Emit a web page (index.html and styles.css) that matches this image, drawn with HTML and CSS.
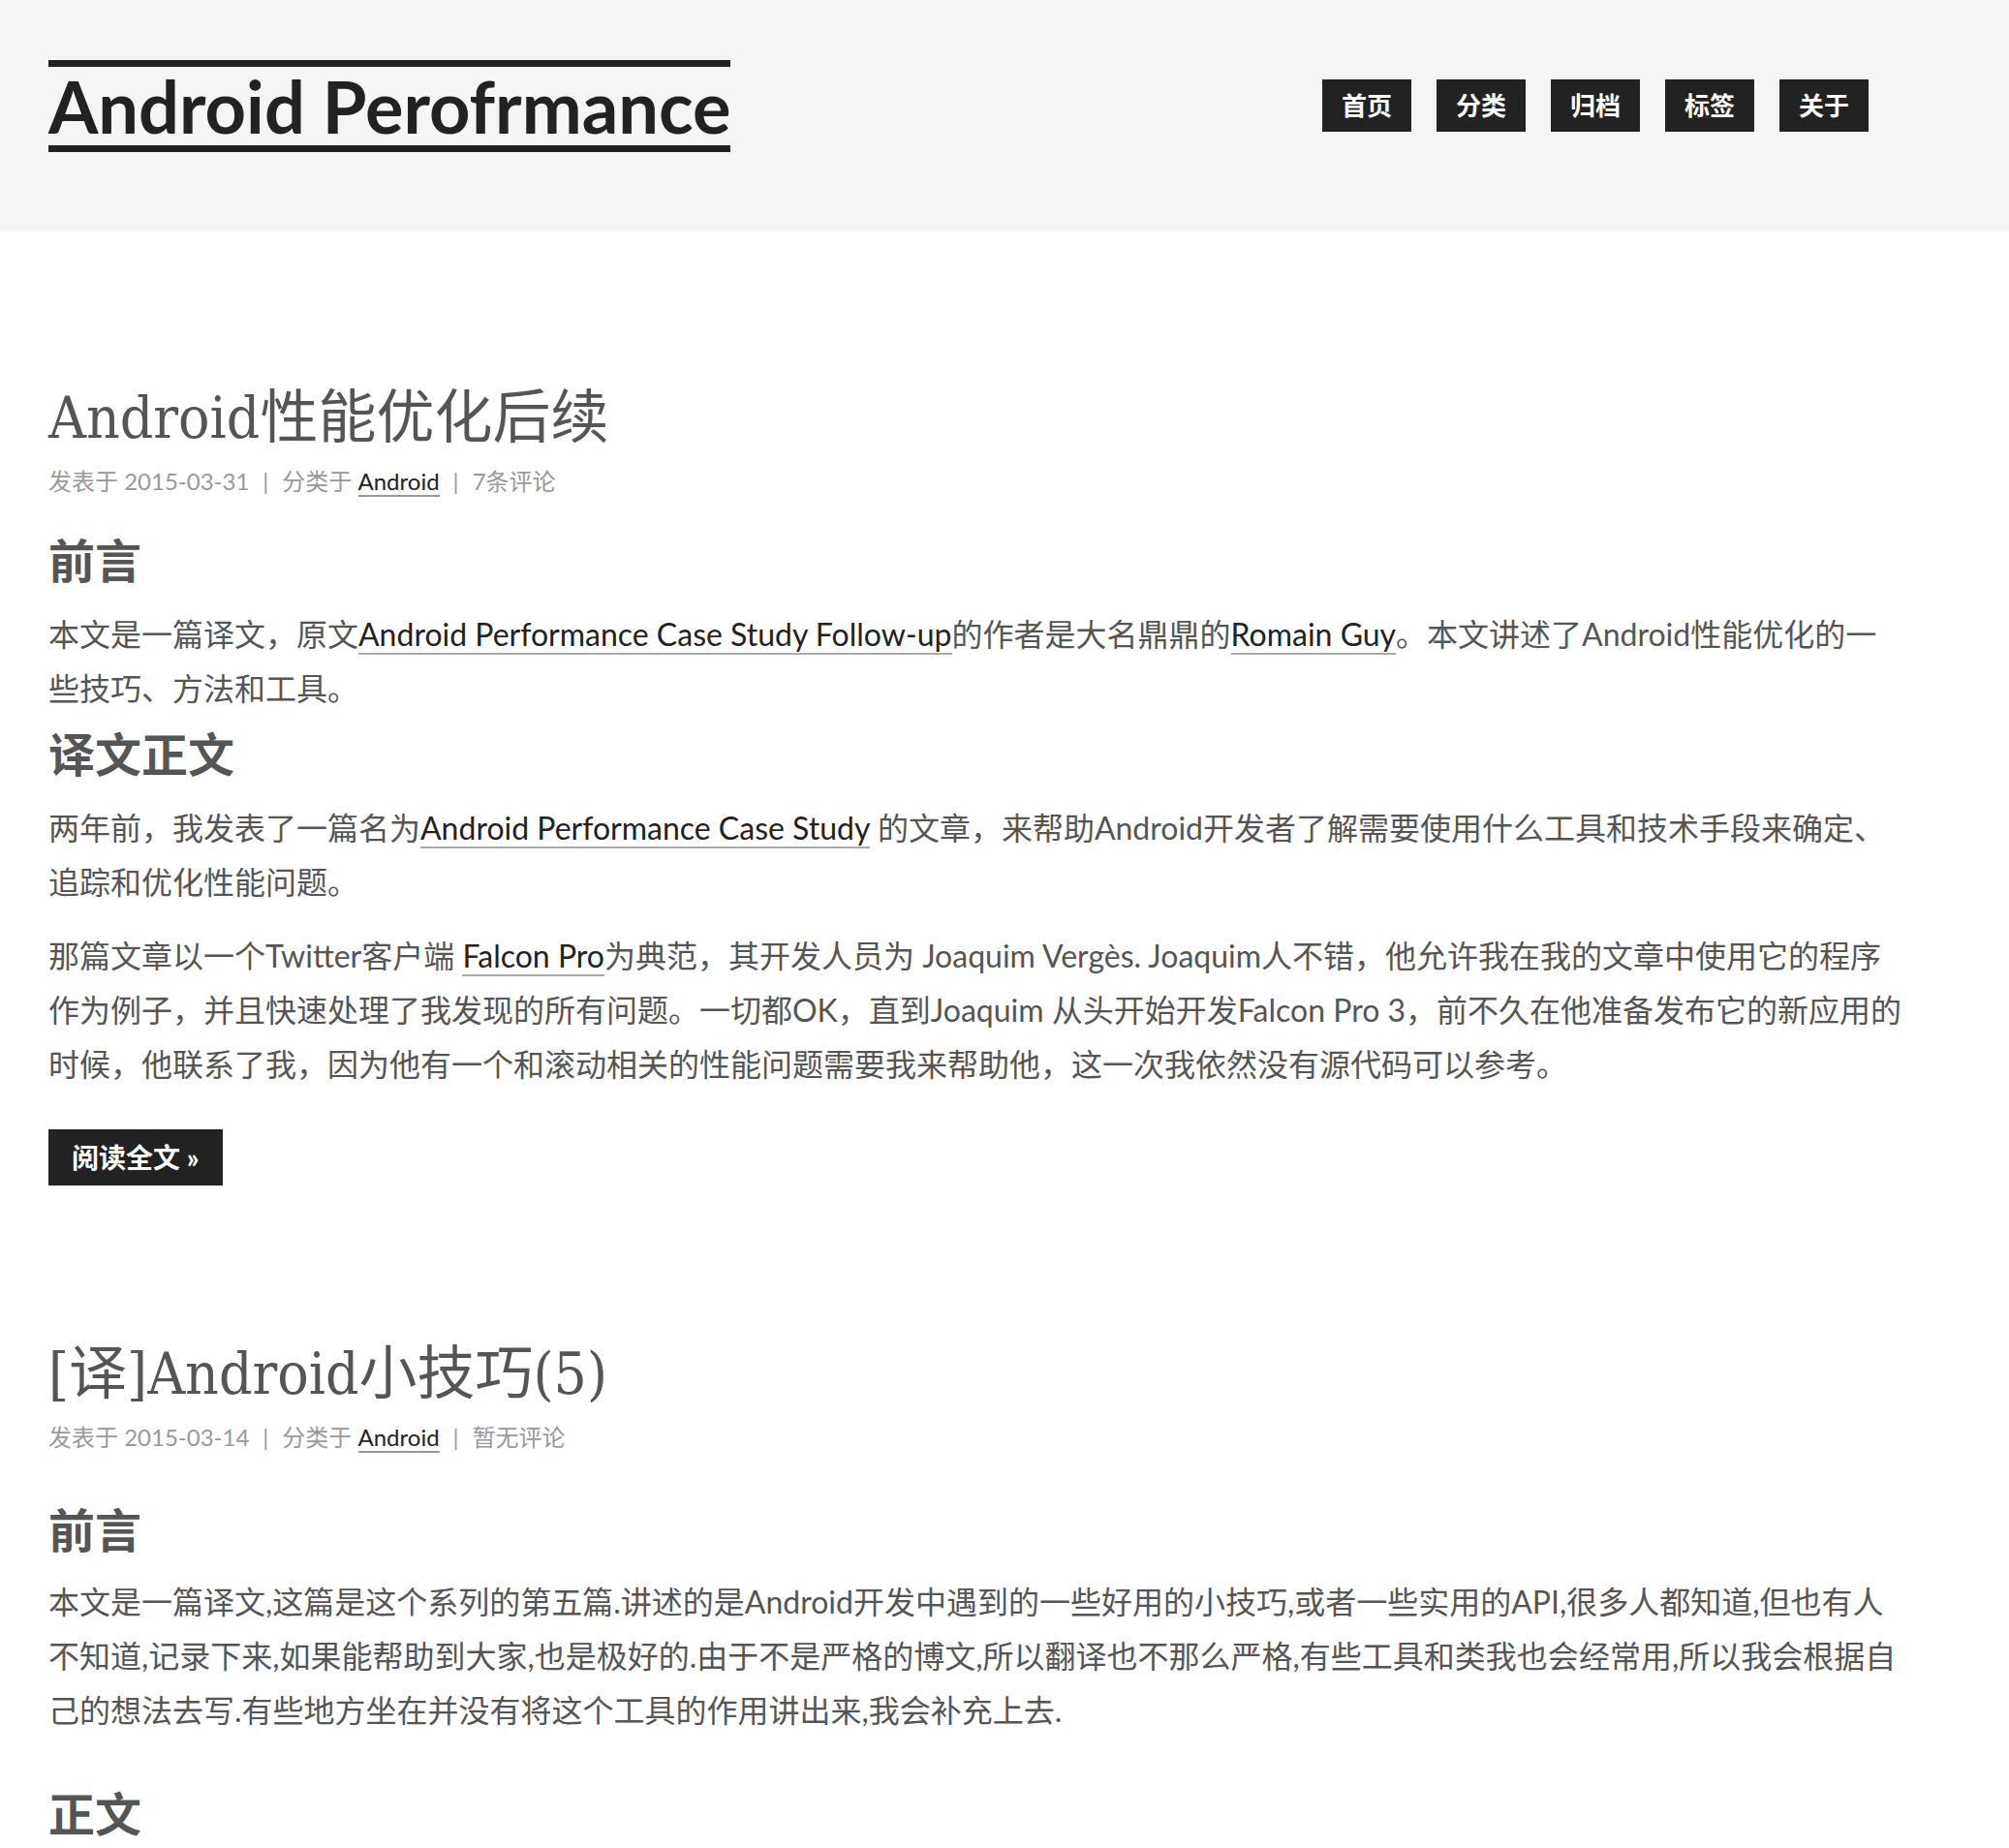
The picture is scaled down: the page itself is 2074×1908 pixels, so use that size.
FILE: index.html
```html
<!DOCTYPE html>
<html lang="zh-CN">
<head>
<meta charset="utf-8">
<title>Android Perofrmance</title>
<link rel="stylesheet" href="styles.css">
</head>
<body>
<header class="site-header">
  <div class="header-inner">
    <a class="logo" href="#">Android Perofrmance</a>
    <nav class="menu">
      <a class="menu-item" href="#">首页</a>
      <a class="menu-item" href="#">分类</a>
      <a class="menu-item" href="#">归档</a>
      <a class="menu-item" href="#">标签</a>
      <a class="menu-item" href="#">关于</a>
    </nav>
  </div>
</header>

<main class="content">
  <article class="post">
    <h1 class="post-title">Android性能优化后续</h1>
    <div class="post-meta">发表于 2015-03-31<span class="sep">|</span>分类于 <a class="meta-link" href="#">Android</a><span class="sep">|</span>7条评论</div>
    <div class="post-body">
      <h2>前言</h2>
      <p>本文是一篇译文，原文<a class="link" href="#">Android Performance Case Study Follow-up</a>的作者是大名鼎鼎的<a class="link" href="#">Romain Guy</a>。本文讲述了Android性能优化的一些技巧、方法和工具。</p>
      <h2>译文正文</h2>
      <p>两年前，我发表了一篇名为<a class="link" href="#">Android Performance Case Study</a> 的文章，来帮助Android开发者了解需要使用什么工具和技术手段来确定、追踪和优化性能问题。</p>
      <p>那篇文章以一个Twitter客户端 <a class="link" href="#">Falcon Pro</a>为典范，其开发人员为 Joaquim Vergès. Joaquim人不错，他允许我在我的文章中使用它的程序作为例子，并且快速处理了我发现的所有问题。一切都OK，直到Joaquim 从头开始开发Falcon Pro 3，前不久在他准备发布它的新应用的时候，他联系了我，因为他有一个和滚动相关的性能问题需要我来帮助他，这一次我依然没有源代码可以参考。</p>
    </div>
    <div class="more"><a class="more-btn" href="#">阅读全文 »</a></div>
  </article>

  <article class="post">
    <h1 class="post-title">[译]Android小技巧(5)</h1>
    <div class="post-meta">发表于 2015-03-14<span class="sep">|</span>分类于 <a class="meta-link" href="#">Android</a><span class="sep">|</span>暂无评论</div>
    <div class="post-body post-body-loose">
      <h2>前言</h2>
      <p>本文是一篇译文,这篇是这个系列的第五篇.讲述的是Android开发中遇到的一些好用的小技巧,或者一些实用的API,很多人都知道,但也有人不知道,记录下来,如果能帮助到大家,也是极好的.由于不是严格的博文,所以翻译也不那么严格,有些工具和类我也会经常用,所以我会根据自己的想法去写.有些地方坐在并没有将这个工具的作用讲出来,我会补充上去.</p>
      <h2 class="h2-spaced">正文</h2>
    </div>
  </article>
</main>
</body>
</html>
```

FILE: styles.css
```css
html, body {
  margin: 0;
  padding: 0;
}

body {
  font-family: "Lato", "Noto Sans CJK SC", sans-serif;
  color: #555;
  background: #fff;
}

a {
  text-decoration: none;
}

/* ---------- header ---------- */
.site-header {
  background: #f5f5f5;
  height: 238px;
}

.header-inner {
  display: flex;
  justify-content: space-between;
  align-items: flex-start;
  padding: 0 145px 0 50px;
}

.logo {
  display: block;
  margin-top: 62px;
  border-top: 7px solid #222;
  border-bottom: 7px solid #222;
  font-family: "Lato", sans-serif;
  font-weight: bold;
  font-size: 74px;
  line-height: 81px;
  color: #222;
}

.menu {
  display: flex;
  gap: 26px;
  margin-top: 82px;
}

.menu-item {
  display: block;
  background: #222;
  color: #fff;
  font-weight: bold;
  font-size: 26px;
  line-height: 54px;
  padding: 0 20px;
}

/* ---------- content ---------- */
.content {
  padding: 157px 108px 0 50px;
}

.post {
  margin-bottom: 158px;
}

.post-title {
  margin: 0;
  font-family: "DejaVu Serif Condensed", "DejaVu Serif", "Noto Sans CJK SC", serif;
  font-stretch: condensed;
  font-weight: normal;
  font-size: 60px;
  line-height: 72px;
  color: #555;
}

.post-meta {
  margin-top: 12px;
  font-size: 24px;
  line-height: 36px;
  color: #999;
}

.sep {
  padding: 0 14px;
}

.meta-link {
  color: #222;
  border-bottom: 2px solid #999;
}

.post-body {
  margin-top: 44px;
}

.post-body-loose {
  margin-top: 58px;
}

.post-body h2 {
  margin: 0 0 28px;
  font-size: 48px;
  line-height: 40px;
  font-weight: bold;
  color: #555;
}

.post-body-loose h2 {
  margin-bottom: 26px;
}

.post-body h2.h2-spaced {
  margin-top: 59px;
}

.post-body p {
  margin: 0 0 20px;
  font-size: 32px;
  line-height: 56px;
}

.link {
  color: #222;
  border-bottom: 2px solid #aaa;
}

.more {
  display: flex;
  margin-top: 39px;
}

.more-btn {
  display: block;
  background: #222;
  color: #fff;
  font-weight: bold;
  font-size: 28px;
  line-height: 58px;
  padding: 0 24px;
}
```
